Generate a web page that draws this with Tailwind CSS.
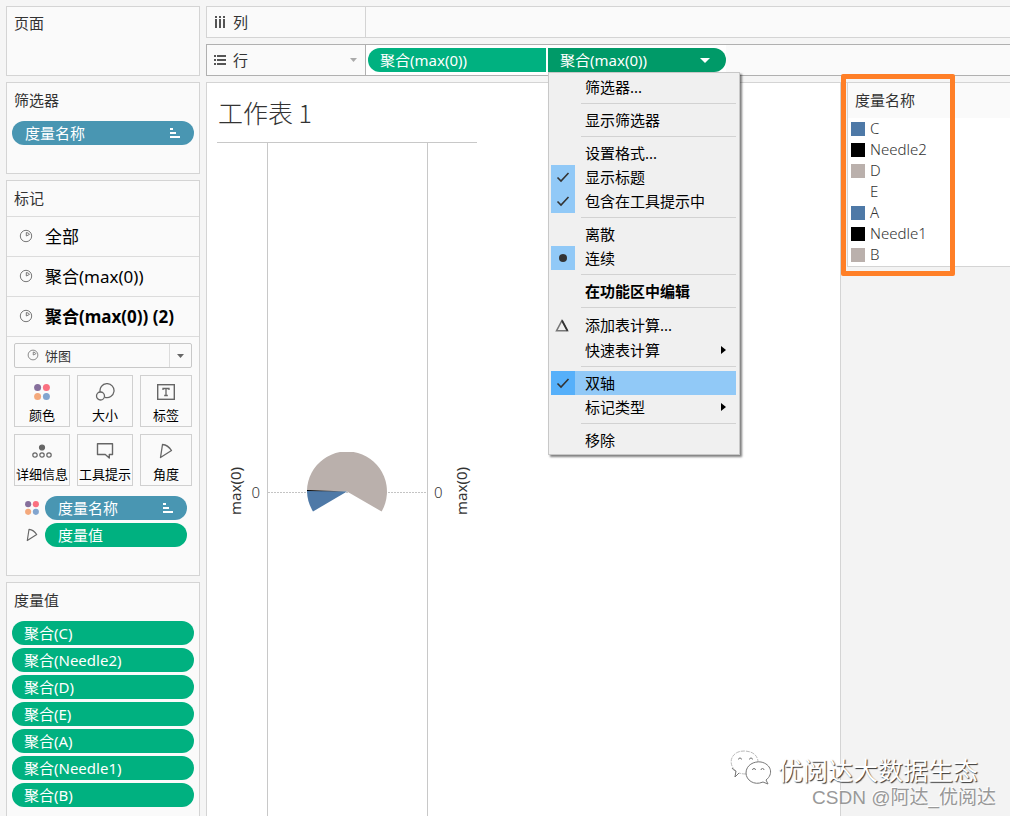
<!DOCTYPE html>
<html lang="zh-CN">
<head>
<meta charset="utf-8">
<meta name="viewport" content="width=device-width, initial-scale=1">
<title>工作表 1</title>
<script src="https://cdn.jsdelivr.net/npm/@tailwindcss/browser@4"></script>
</head>
<body class="h-screen overflow-hidden bg-[#f5f5f5] text-[15px] leading-6 text-[#333] font-['Noto_Sans','Noto_Sans_CJK_SC',sans-serif]">
<svg class="hidden" aria-hidden="true">
  <symbol id="pie" viewBox="0 0 14 14"><g fill="none" stroke="#777" stroke-width="1"><circle cx="7" cy="7" r="5.700"/><path d="M7.300 3.500V7L10.500 5.400Q9.800 3.800 7.300 3.500"/></g></symbol>
  <symbol id="sort" viewBox="0 0 10 10"><path fill="#fff" d="M0 0h3v2H0zM0 4h6v2H0zM0 8h10v2H0z"/></symbol>
  <symbol id="dots" viewBox="0 0 16 16"><circle cx="3.600" cy="3.600" r="3.500" fill="#866f9c"/><circle cx="12.400" cy="3.600" r="3.500" fill="#fa7080"/><circle cx="3.600" cy="12.400" r="3.500" fill="#f4a97c"/><circle cx="12.400" cy="12.400" r="3.500" fill="#82a5cf"/></symbol>
  <symbol id="angle" viewBox="0 0 14 16"><path d="M3.500 1.500L1.500 14.500L12.500 7.500Q9 2 3.500 1.500Z" fill="none" stroke="#666" stroke-width="1.300" stroke-linejoin="round"/></symbol>
  <symbol id="check" viewBox="0 0 14 12"><path d="M1.500 6.500L5 10L12.500 2" fill="none" stroke="#333" stroke-width="1.600"/></symbol>
</svg>
<div class="flex h-full gap-1.5 pt-1.5 pl-1.5">
  <aside class="flex w-[194px] shrink-0 flex-col gap-1.5">
    <section class="h-[70px] shrink-0 border border-[#d4d4d4] bg-[#fafafa] px-[7px] pt-1"><h2>页面</h2></section>
    <section class="h-[92px] shrink-0 border border-[#d4d4d4] bg-[#fafafa] px-[5px] pt-[5px]">
      <h2 class="px-0.5">筛选器</h2>
      <button class="mt-[9px] flex h-6 w-full items-center justify-between rounded-full bg-[#4996b2] pr-3.5 pl-[13px] text-white"><span>度量名称</span><svg class="size-2.5"><use href="#sort"/></svg></button>
    </section>
    <section class="h-[396px] shrink-0 border border-[#d4d4d4] bg-[#fafafa]">
      <h2 class="h-9 border-b border-[#dcdcdc] px-[7px] pt-[5px]">标记</h2>
      <div class="text-[17px] text-black">
        <button class="flex h-10 w-full items-center gap-3 border-b border-[#dcdcdc] pl-3"><svg class="mb-0.5 size-3.5"><use href="#pie"/></svg><span>全部</span></button>
        <button class="flex h-10 w-full items-center gap-3 border-b border-[#dcdcdc] pl-3"><svg class="mb-0.5 size-3.5"><use href="#pie"/></svg><span>聚合(max(0))</span></button>
        <button class="flex h-10 w-full items-center gap-3 border-b border-[#dcdcdc] pl-3 font-bold"><svg class="mb-0.5 size-3.5"><use href="#pie"/></svg><span>聚合(max(0)) (2)</span></button>
      </div>
      <div class="px-[7px] pt-1.5">
        <div class="relative h-[25px] w-[178px]">
          <select aria-label="标记类型" class="h-full w-full appearance-none rounded-xs border border-[#c8c8c8] bg-[#fafafa] pl-[30px] text-[13px]"><option>饼图</option></select>
          <svg class="pointer-events-none absolute top-1.5 left-[13px] size-3"><use href="#pie"/></svg>
          <span class="pointer-events-none absolute inset-y-px right-px flex w-[22px] items-center justify-center border-l border-[#dcdcdc]"><svg class="h-1 w-[7px]" viewBox="0 0 7 4"><path d="M0 0h7L3.500 4z" fill="#666"/></svg></span>
        </div>
        <div class="mt-[7px] grid grid-cols-[56px_56px_52px] gap-[7px] text-[13px] leading-5 text-black">
          <button class="flex h-[52px] flex-col items-center border border-[#d0d0d0] pt-2"><svg class="size-4"><use href="#dots"/></svg><span class="mt-[5px] whitespace-nowrap">颜色</span></button>
          <button class="flex h-[52px] flex-col items-center border border-[#d0d0d0] pt-[7px]"><svg class="h-[18px] w-5" viewBox="0 0 20 18" fill="none" stroke="#666" stroke-width="1.300"><path d="M5.200 9.200A7 7 0 1 1 9.900 14.300"/><circle cx="5.500" cy="13" r="4"/></svg><span class="mt-1 whitespace-nowrap">大小</span></button>
          <button class="flex h-[52px] flex-col items-center border border-[#d0d0d0] pt-2"><svg class="h-4 w-[18px]" viewBox="0 0 18 16" fill="none" stroke="#666"><rect x=".7" y=".7" width="16.600" height="14.600" stroke-width="1.400"/><path d="M6 6V4.500h6V6M9 4.500v7M7.200 11.500h3.600" stroke-width="1.300"/></svg><span class="mt-[5px] whitespace-nowrap">标签</span></button>
          <button class="flex h-[52px] flex-col items-center border border-[#d0d0d0] pt-2"><svg class="h-4 w-5" viewBox="0 0 20 16" fill="none" stroke="#666" stroke-width="1.200"><circle cx="10" cy="4.500" r="2.500" fill="#666"/><circle cx="3" cy="12" r="2.200"/><circle cx="10" cy="12" r="2.200"/><circle cx="17" cy="12" r="2.200"/></svg><span class="mt-[5px] whitespace-nowrap">详细信息</span></button>
          <button class="flex h-[52px] flex-col items-center border border-[#d0d0d0] pt-2"><svg class="h-4 w-[18px]" viewBox="0 0 18 16"><path d="M1.500.7h15v10.800h-3.200v3.500l-4-3.500H1.500z" fill="none" stroke="#666" stroke-width="1.400" stroke-linejoin="round"/></svg><span class="mt-[5px] whitespace-nowrap">工具提示</span></button>
          <button class="flex h-[52px] flex-col items-center border border-[#d0d0d0] pt-2"><svg class="h-4 w-3.5"><use href="#angle"/></svg><span class="mt-[5px] whitespace-nowrap">角度</span></button>
        </div>
        <div class="mt-2.5 mr-[5px] ml-2.5 grid grid-cols-[16px_1fr] items-center gap-x-[5px] gap-y-[3px]">
          <svg class="size-3.5 justify-self-center"><use href="#dots"/></svg>
          <button class="flex h-6 items-center justify-between rounded-full bg-[#4996b2] pr-3.5 pl-[13px] text-white"><span>度量名称</span><svg class="size-2.5"><use href="#sort"/></svg></button>
          <svg class="h-3.5 w-3 justify-self-center"><use href="#angle"/></svg>
          <button class="flex h-6 items-center rounded-full bg-[#00b180] pl-[13px] text-white">度量值</button>
        </div>
      </div>
    </section>
    <section class="flex-1 border border-b-0 border-[#d4d4d4] bg-[#fafafa] px-[5px] pt-[5px]">
      <h2 class="px-0.5">度量值</h2>
      <div class="mt-[9px] flex flex-col gap-[3px] text-white">
        <button class="h-6 rounded-full bg-[#00b180] pl-3 text-left">聚合(C)</button>
        <button class="h-6 rounded-full bg-[#00b180] pl-3 text-left">聚合(Needle2)</button>
        <button class="h-6 rounded-full bg-[#00b180] pl-3 text-left">聚合(D)</button>
        <button class="h-6 rounded-full bg-[#00b180] pl-3 text-left">聚合(E)</button>
        <button class="h-6 rounded-full bg-[#00b180] pl-3 text-left">聚合(A)</button>
        <button class="h-6 rounded-full bg-[#00b180] pl-3 text-left">聚合(Needle1)</button>
        <button class="h-6 rounded-full bg-[#00b180] pl-3 text-left">聚合(B)</button>
      </div>
    </section>
  </aside>

  <main class="flex min-w-0 flex-1 flex-col gap-1.5">
    <section class="flex h-8 shrink-0 border border-r-0 border-[#d4d4d4] bg-[#fafafa]">
      <div class="flex w-[159px] items-center gap-1.5 border-r border-[#d4d4d4] pl-[7px]">
        <svg class="h-3 w-[13px]" viewBox="0 0 13 12" fill="#555"><path d="M1 0h2v2H1zM5 0h2v2H5zM9 0h2v2H9zM1 3h2v9H1zM5 3h2v9H5zM9 3h2v9H9z"/></svg><h2>列</h2>
      </div>
    </section>
    <section class="flex h-8 shrink-0 border border-r-0 border-[#b0b0b0] bg-[#fafafa]">
      <div class="flex w-[159px] items-center gap-1.5 border-r border-[#b0b0b0] pl-[7px]">
        <svg class="h-2.5 w-[13px]" viewBox="0 0 13 10" fill="#555"><path d="M0 0h2v2H0zM0 4h2v2H0zM0 8h2v2H0zM3 0h9v2H3zM3 4h9v2H3zM3 8h9v2H3z"/></svg><h2>行</h2>
        <button aria-label="行选项" class="ml-auto pr-2"><svg class="h-1 w-[7px]" viewBox="0 0 7 4"><path d="M0 0h7L3.500 4z" fill="#aaa"/></svg></button>
      </div>
      <div class="flex gap-0.5 bg-white py-[3px] pl-0.5 text-white">
        <button class="h-6 w-[178px] rounded-l-full bg-[#00b180] pl-3 text-left">聚合(max(0))</button>
        <div class="relative">
          <button class="flex h-6 w-[178px] items-center justify-between rounded-r-full bg-[#009a68] pr-4 pl-3"><span>聚合(max(0))</span><svg class="h-[5px] w-2.5" viewBox="0 0 10 5"><path d="M0 0h10L5 5z" fill="#fff"/></svg></button>
          <div role="menu" class="absolute top-full left-0 z-20 w-48 border border-[#c8c8c8] bg-[#f0f0f0] py-0.5 pr-[3px] pl-0.5 text-black shadow-[2px_2px_2px_rgba(0,0,0,0.5)]">
            <button role="menuitem" class="block h-6 w-full pl-[34px] text-left">筛选器...</button>
            <hr class="my-1 ml-[30px] border-[#d2d2d2]">
            <button role="menuitem" class="block h-6 w-full pl-[34px] text-left">显示筛选器</button>
            <hr class="my-1 ml-[30px] border-[#d2d2d2]">
            <button role="menuitem" class="block h-6 w-full pl-[34px] text-left">设置格式...</button>
            <button role="menuitem" class="flex h-6 w-full gap-2.5 text-left"><span class="flex size-6 items-center justify-center bg-[#91c9f7]"><svg class="h-3 w-3.5"><use href="#check"/></svg></span>显示标题</button>
            <button role="menuitem" class="flex h-6 w-full gap-2.5 text-left"><span class="flex size-6 items-center justify-center bg-[#91c9f7]"><svg class="h-3 w-3.5"><use href="#check"/></svg></span>包含在工具提示中</button>
            <hr class="my-1 ml-[30px] border-[#d2d2d2]">
            <button role="menuitem" class="block h-6 w-full pl-[34px] text-left">离散</button>
            <button role="menuitem" class="flex h-6 w-full gap-2.5 text-left"><span class="flex size-6 items-center justify-center bg-[#91c9f7]"><span class="size-2 rounded-full bg-[#333]"></span></span>连续</button>
            <hr class="my-1 ml-[30px] border-[#d2d2d2]">
            <button role="menuitem" class="block h-6 w-full pl-[34px] text-left font-bold">在功能区中编辑</button>
            <hr class="my-1 ml-[30px] border-[#d2d2d2]">
            <button role="menuitem" class="flex h-[26px] w-full items-center gap-2.5 text-left"><span class="flex w-6 justify-center"><svg class="mr-0.5 h-[13px] w-3.5" viewBox="0 0 14 13"><path d="M7 1.500L12.500 11.800H1.500z" fill="none" stroke="#777" stroke-width="1.500"/><path d="M7 1.500L12.500 11.800" stroke="#333" stroke-width="1.800"/></svg></span>添加表计算...</button>
            <button role="menuitem" class="flex h-6 w-full items-center justify-between pr-2.5 pl-[34px]">快速表计算<svg class="h-2 w-[5px]" viewBox="0 0 5 8"><path d="M0 0l5 4-5 4z"/></svg></button>
            <hr class="my-1 ml-[30px] border-[#d2d2d2]">
            <button role="menuitem" class="flex h-6 w-full gap-2.5 bg-[#91c9f7] text-left"><span class="flex size-6 items-center justify-center bg-[#56b0fa]"><svg class="h-3 w-3.5"><use href="#check"/></svg></span>双轴</button>
            <button role="menuitem" class="flex h-6 w-full items-center justify-between pr-2.5 pl-[34px]">标记类型<svg class="h-2 w-[5px]" viewBox="0 0 5 8"><path d="M0 0l5 4-5 4z"/></svg></button>
            <hr class="my-1 ml-[30px] border-[#d2d2d2]">
            <button role="menuitem" class="block h-6 w-full pl-[34px] text-left">移除</button>
          </div>
        </div>
      </div>
    </section>

    <div class="flex min-h-0 flex-1">
      <section class="flex min-w-0 flex-1 flex-col border-t border-l border-[#d4d4d4] bg-white">
        <h1 class="h-[59px] pt-[11px] pl-[11px] text-[25px] leading-9 font-light text-[#333] font-['Noto_Sans_CJK_SC',sans-serif]">工作表 1</h1>
        <div class="ml-2.5 grid w-[260px] flex-1 grid-cols-[50px_161px_49px] border-t border-[#c8c8c8]">
          <div class="flex items-center justify-end pt-6">
            <span class="mb-0.5 rotate-180 leading-5 [writing-mode:vertical-rl]">max(0)</span><span class="ml-1.5 pr-[7px] text-[15px] font-light">0</span>
          </div>
          <div class="flex items-center justify-center border-x border-[#c8c8c8] pt-6">
            <svg class="h-20 w-full" viewBox="0 0 159 80">
              <path d="M0 40.500H159" stroke="#c4c4c4" stroke-dasharray="2 1"/>
              <path d="M79 39.500L39 38.200A40 40 0 1 1 113.600 59.500Z" fill="#bab0ac"/>
              <path d="M79 39.500L39 38.800A40 40 0 0 0 45 59.500Z" fill="#4e79a7"/>
              <path d="M79 39.500L39 38V39Z" fill="#000"/>
            </svg>
          </div>
          <div class="flex items-center pt-6">
            <span class="pl-1.5 text-[15px] font-light">0</span><span class="mb-0.5 ml-2 rotate-180 leading-5 [writing-mode:vertical-rl]">max(0)</span>
          </div>
        </div>
      </section>
      <aside class="relative w-[170px] shrink-0 border-t border-l border-[#d4d4d4] bg-[#f3f3f3] pl-1.5">
        <section class="border-b border-l border-[#d4d4d4] bg-white pb-px">
          <h2 class="h-[35px] bg-[#fafafa] pt-[5px] pl-[7px]">度量名称</h2>
          <ul class="pl-[3px] leading-[21px] font-light">
            <li class="flex items-center gap-[5px]"><span class="size-3.5 bg-[#4e79a7]"></span>C</li>
            <li class="flex items-center gap-[5px]"><span class="size-3.5 bg-black"></span>Needle2</li>
            <li class="flex items-center gap-[5px]"><span class="size-3.5 bg-[#bab0ac]"></span>D</li>
            <li class="flex items-center gap-[5px]"><span class="size-3.5 bg-white"></span>E</li>
            <li class="flex items-center gap-[5px]"><span class="size-3.5 bg-[#4e79a7]"></span>A</li>
            <li class="flex items-center gap-[5px]"><span class="size-3.5 bg-black"></span>Needle1</li>
            <li class="flex items-center gap-[5px]"><span class="size-3.5 bg-[#bab0ac]"></span>B</li>
          </ul>
        </section>
        <div class="absolute -top-[9px] left-0 h-[202px] w-[114px] rounded-xs border-[5px] border-[#ff7f27]"></div>
      </aside>
    </div>
  </main>
</div>
<div class="absolute right-3.5 bottom-1.5 flex flex-col items-end whitespace-nowrap">
  <div class="mr-[18px] flex items-center gap-1.5 text-[25px] leading-7 text-white [text-shadow:1px_1px_1px_#333]">
    <svg class="h-9 w-[42px]" viewBox="0 0 42 36" fill="#fff" stroke-width="1"><path d="M16 24Q12 24 9 23L5 27L6 21C-3 14 1 1 14 1C23 1 28 6 28 12" stroke="#bbb" stroke-dasharray="4 1"/><path d="M2 18Q3 20 6 21L5 27L9 23" stroke="#777"/><path d="M36 30L38 34L33 32C24 36 16 30 16 23C16 15 24 11 31 12C41 14 44 24 36 30Z" stroke="#777"/><path d="M8.500 9.500a1.500 1.500 0 0 1 3 0M19.500 9.500a1.500 1.500 0 0 1 3 0M22.500 20a1.500 1.500 0 0 1 3 0M31 20a1.500 1.500 0 0 1 3 0" stroke="#777"/></svg>
    <span class="pt-1">优阅达大数据生态</span>
  </div>
  <div class="text-[19px] leading-6 text-[#999] font-['Liberation_Sans','Noto_Sans_CJK_SC',sans-serif] [text-shadow:-1px_-1px_0_#fff]">CSDN @阿达_优阅达</div>
</div>
</body>
</html>
